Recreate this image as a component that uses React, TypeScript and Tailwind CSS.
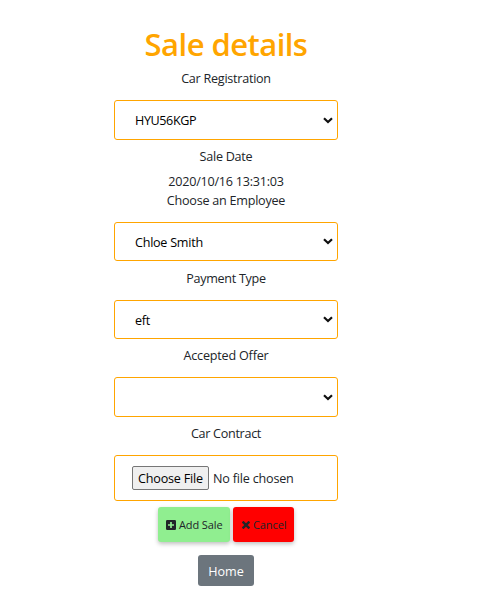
import type { ReactNode } from "react";

function Label({ children, className }: { children: ReactNode; className: string }) {
  return (
    <div className={`flex w-full items-center justify-center whitespace-nowrap pt-0.5 text-[12.6px] text-[#212529] ${className}`}>
      <span>{children}</span>
    </div>
  );
}

function SelectBox({ value, className, textClass = "" }: { value: string; className: string; textClass?: string }) {
  return (
    <div className={`relative flex w-full items-center rounded-[3px] border border-[#ffa500] bg-white ${className}`}>
      <select defaultValue={value} className={`h-full w-full appearance-none bg-transparent pl-5 pt-[3px] text-[12.6px] text-black outline-none ${textClass}`}>
        <option value={value}>{value}</option>
      </select>
      <svg viewBox="0 0 10 7" className="pointer-events-none absolute right-1 h-[7px] w-[10px]" fill="none" stroke="#101010" strokeWidth="2.2">
        <path d="M1 1.2 L5 5 L9 1.2" />
      </svg>
    </div>
  );
}

export default function App() {
  return (
    <main className="flex h-[597px] w-[477px] flex-col bg-white pl-[114px] pt-[25px] font-['Open_Sans','Noto_Sans',sans-serif]">
      <div className="flex w-56 flex-col items-center">
        <h1 className="mb-px h-[38px] whitespace-nowrap text-[31px] font-semibold leading-[38px] tracking-[-0.55px] text-[#ffa500]">Sale details</h1>
        <Label className="mb-3 mt-1 h-5 tracking-[-0.26px]">Car Registration</Label>
        <SelectBox value="HYU56KGP" className="h-10" textClass="tracking-[-0.4px]" />
        <Label className="mt-[6px] h-5 tracking-[-0.26px]">Sale Date</Label>
        <Label className="mt-[6px] h-[19px] tracking-[-0.24px]">2020/10/16 13:31:03</Label>
        <Label className="mb-3 h-[19px] tracking-[-0.24px]">Choose an Employee</Label>
        <SelectBox value="Chloe Smith" className="h-[39px]" textClass="tracking-[-0.26px]" />
        <Label className="mb-[12px] mt-2 h-[19px] tracking-[-0.3px]">Payment Type</Label>
        <SelectBox value="eft" className="h-[39px]" textClass="tracking-[-0.3px]" />
        <Label className="mb-3 mt-[7px] h-[19px] tracking-[-0.2px]">Accepted Offer</Label>
        <SelectBox value="" className="h-10" />
        <Label className="mb-3 mt-[7px] h-[19px] tracking-[-0.3px]">Car Contract</Label>
        <div className="flex h-[46px] w-full items-center whitespace-nowrap rounded-[3px] border border-[#ffa500] pl-[17px] text-[12.6px]">
          <button className="flex h-6 w-[77px] items-center justify-center rounded-[2px] border border-[#767676] bg-[#efefef] pt-0.5 tracking-[-0.2px] text-black">
            Choose File
          </button>
          <span className="ml-1 pt-0.5 tracking-[-0.2px] text-[#212529]">No file chosen</span>
        </div>
        <div className="mt-[6px] flex gap-[3px] whitespace-nowrap text-[11px] text-[#212529]">
          <button className="flex h-[35px] w-[72px] items-center rounded-[3px] bg-[#90ee90] pl-2 shadow-[0_2px_4px_rgba(0,0,0,0.25)]">
            <svg viewBox="0 0 10 10" className="mr-[3px] h-[10px] w-[10px]">
              <rect width="10" height="10" rx="1.2" fill="#212529" />
              <path d="M5 2v6M2 5h6" stroke="#90ee90" strokeWidth="1.7" />
            </svg>
            <span className="pt-0.5 tracking-[-0.1px]">Add Sale</span>
          </button>
          <button className="flex h-[35px] w-[61px] items-center rounded-[3px] bg-[#ff0000] pl-[9px] shadow-[0_2px_4px_rgba(0,0,0,0.25)]">
            <svg viewBox="0 0 8 8" className="mr-[3px] h-2 w-2" stroke="#212529" strokeWidth="2.4">
              <path d="M0.6 0.6l6.8 6.8M7.4 0.6L0.6 7.4" />
            </svg>
            <span className="pt-0.5 tracking-[-0.1px]">Cancel</span>
          </button>
        </div>
        <button className="mt-[13px] flex h-[31px] w-14 items-center justify-center rounded-[3px] bg-[#6c757d] pt-[3px] text-[12.6px] text-white">
          Home
        </button>
      </div>
    </main>
  );
}
